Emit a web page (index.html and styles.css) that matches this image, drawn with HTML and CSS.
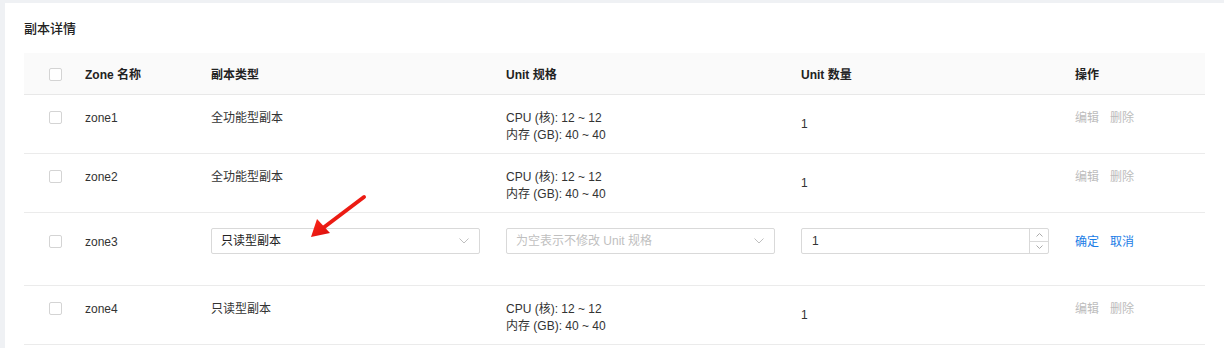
FILE: index.html
```html
<!DOCTYPE html>
<html>

<head>
  <meta charset="utf-8">
  <title>副本详情</title>
  <link rel="stylesheet" href="styles.css">
</head>

<body>
  <div class="card">
    <h3 class="title">副本详情</h3>

    <table class="replicas">
      <colgroup>
        <col class="c-check">
        <col class="c-zone">
        <col class="c-type">
        <col class="c-spec">
        <col class="c-count">
        <col class="c-ops">
      </colgroup>
      <thead>
        <tr>
          <th><span class="checkbox"></span></th>
          <th>Zone 名称</th>
          <th>副本类型</th>
          <th>Unit 规格</th>
          <th>Unit 数量</th>
          <th>操作</th>
        </tr>
      </thead>
      <tbody>
        <tr>
          <td><span class="checkbox"></span></td>
          <td>zone1</td>
          <td>全功能型副本</td>
          <td>CPU (核): 12 ~ 12<br>内存 (GB): 40 ~ 40</td>
          <td class="count">1</td>
          <td class="ops"><a>编辑</a><a>删除</a></td>
        </tr>
        <tr>
          <td><span class="checkbox"></span></td>
          <td>zone2</td>
          <td>全功能型副本</td>
          <td>CPU (核): 12 ~ 12<br>内存 (GB): 40 ~ 40</td>
          <td class="count">1</td>
          <td class="ops"><a>编辑</a><a>删除</a></td>
        </tr>
        <tr class="editing">
          <td><span class="checkbox"></span></td>
          <td>zone3</td>
          <td>
            <div class="select">
              <span>只读型副本</span>
              <svg class="chevron" width="10" height="6" viewBox="0 0 10 6"><path d="M0.5 0.5 L5 5 L9.5 0.5" fill="none" stroke="#bfbfbf" stroke-width="1"/></svg>
            </div>
          </td>
          <td>
            <div class="select">
              <span class="placeholder">为空表示不修改 Unit 规格</span>
              <svg class="chevron" width="10" height="6" viewBox="0 0 10 6"><path d="M0.5 0.5 L5 5 L9.5 0.5" fill="none" stroke="#bfbfbf" stroke-width="1"/></svg>
            </div>
          </td>
          <td>
            <div class="number">
              <span class="value">1</span>
              <div class="spin">
                <div><svg width="7" height="4" viewBox="0 0 7 4"><path d="M0.5 3.5 L3.5 0.5 L6.5 3.5" fill="none" stroke="#aaa" stroke-width="1"/></svg></div>
                <div><svg width="7" height="4" viewBox="0 0 7 4"><path d="M0.5 0.5 L3.5 3.5 L6.5 0.5" fill="none" stroke="#aaa" stroke-width="1"/></svg></div>
              </div>
            </div>
          </td>
          <td class="ops active"><a>确定</a><a>取消</a></td>
        </tr>
        <tr>
          <td><span class="checkbox"></span></td>
          <td>zone4</td>
          <td>只读型副本</td>
          <td>CPU (核): 12 ~ 12<br>内存 (GB): 40 ~ 40</td>
          <td class="count">1</td>
          <td class="ops"><a>编辑</a><a>删除</a></td>
        </tr>
      </tbody>
    </table>

    <svg class="pointer" width="62" height="50" viewBox="0 0 62 50">
      <defs>
        <linearGradient id="red" x1="0" y1="0" x2="1" y2="1">
          <stop offset="0" stop-color="#ff2a1a"/>
          <stop offset="1" stop-color="#d80c0c"/>
        </linearGradient>
      </defs>
      <line x1="57" y1="4" x2="16" y2="35" stroke="url(#red)" stroke-width="4" stroke-linecap="round"/>
      <polygon points="4,44 10,26 23,40" fill="url(#red)"/>
    </svg>
  </div>
</body>

</html>
```

FILE: styles.css
```css
body {
  margin: 0;
  padding: 3px 0 0 5px;
  background: #eff1f4;
  font-family: 'Liberation Sans', 'Noto Sans CJK SC', sans-serif;
  font-size: 12px;
  color: #333;
  overflow: hidden;
}

.card {
  position: relative;
  background: #fff;
  padding: 17px 19px 20px 19px;
  height: 400px;
}

.title {
  margin: 0 0 15px 0;
  font-size: 13px;
  font-weight: 500;
  line-height: 18px;
  color: #222;
}

.replicas {
  width: 1181px;
  border-collapse: collapse;
  table-layout: fixed;
  font-size: 12px;
}

.c-check { width: 45px; }
.c-zone { width: 126px; }
.c-type { width: 295px; }
.c-spec { width: 295px; }
.c-count { width: 274px; }
.c-ops { width: 146px; }

.replicas th {
  background: #fafafa;
  height: 41px;
  padding: 0 0 0 16px;
  text-align: left;
  font-weight: 600;
  color: #222;
  border-bottom: 1px solid #e8e8e8;
}

.replicas td {
  padding: 15px 0 0 16px;
  box-sizing: border-box;
  vertical-align: top;
  line-height: 17px;
  border-bottom: 1px solid #ebebeb;
}

.replicas td.count {
  vertical-align: middle;
  padding-top: 0;
}

.replicas th:first-child,
.replicas td:first-child {
  padding-left: 25px;
}

.replicas tbody tr td {
  height: 59px;
}

.replicas tr.editing td {
  height: 73px;
  padding-top: 15px;
  line-height: 28px;
}

.checkbox {
  display: inline-block;
  width: 11px;
  height: 11px;
  border: 1px solid #d4d4d4;
  border-radius: 2px;
  background: #fff;
  vertical-align: middle;
}

td .checkbox {
  vertical-align: -2px;
}

.ops a {
  color: #bcbcbc;
  margin-right: 11px;
}

.ops.active a {
  color: #1a7ce6;
}

.select,
.number {
  display: flex;
  align-items: center;
  box-sizing: border-box;
  height: 26px;
  border: 1px solid #d9d9d9;
  border-radius: 2px;
  background: #fff;
  line-height: 17px;
}

.select {
  width: 269px;
  padding: 0 10px 0 9px;
  justify-content: space-between;
}

.select span {
  color: #222;
}

.select .placeholder {
  color: #bfbfbf;
}

.number {
  width: 248px;
  padding-left: 10px;
  justify-content: space-between;
}

.spin {
  display: flex;
  flex-direction: column;
  width: 18px;
  height: 24px;
  border-left: 1px solid #d9d9d9;
}

.spin div {
  flex: 1;
  display: flex;
  align-items: center;
  justify-content: center;
}

.spin div + div {
  border-top: 1px solid #d9d9d9;
}

.spin svg {
  display: block;
}

.pointer {
  position: absolute;
  left: 302px;
  top: 190px;
}
```
